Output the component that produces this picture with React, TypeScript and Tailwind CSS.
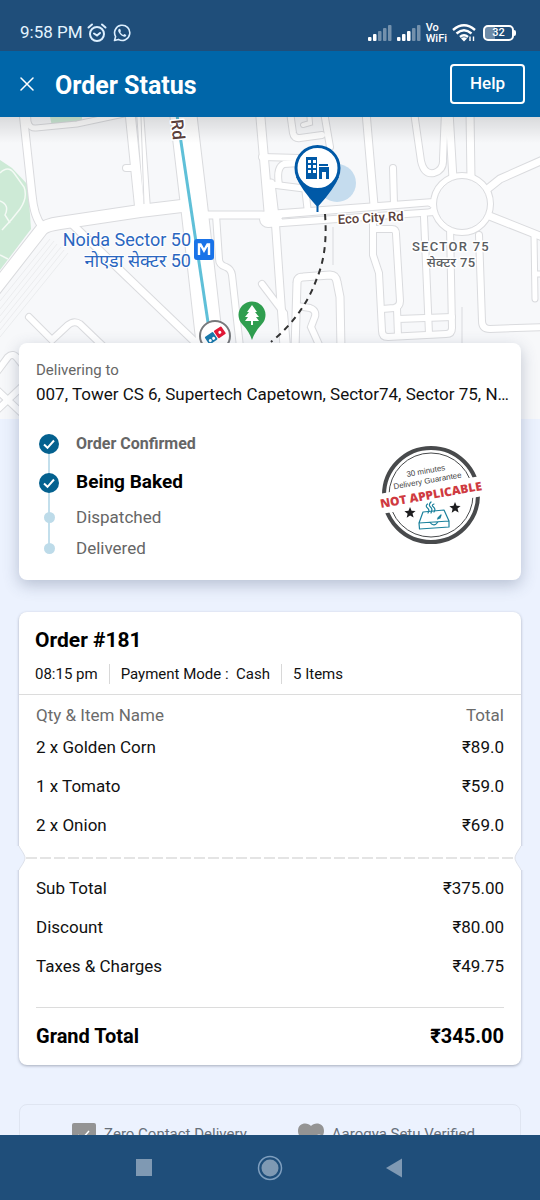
import React from "react";

type Road = { d: string; w: number };

const ROADS: Road[] = [
  { d: "M23 -5 L32 78 Q34 100 42 109", w: 7 },
  { d: "M28 -5 Q26 12 36 11 L77 7 L124 -3", w: 5 },
  { d: "M-8 176 L42 112 Q46 108 60 106 L140 94 L190 88", w: 12 },
  { d: "M130 -5 L140 94", w: 9 },
  { d: "M140 -5 L147 92", w: 6 },
  { d: "M126 51 L136 51", w: 6 },
  { d: "M73 108 L194 224", w: 7 },
  { d: "M29 200 L52 223 L68 208 Q74 203 80 207 L106 232", w: 6 },
  { d: "M-4 256 L8 240 Q13 235 18 242 L40 270", w: 6 },
  { d: "M-6 270 L30 304 M-6 296 L30 262", w: 6 },
  { d: "M200 98 L262 98 Q266 98 270 101", w: 7 },
  { d: "M260 -5 L269 100", w: 8 },
  { d: "M216 98 L219 142 Q219 148 226 150 Q231 152 232 158 L240 230", w: 6 },
  { d: "M262 40 L300 41", w: 6 },
  { d: "M262 167 L284 196 L287 230", w: 6 },
  { d: "M290 -5 L293 16 Q294 22 300 21 L322 18", w: 6 },
  { d: "M303 8 L310 6 L309 -5", w: 4 },
  { d: "M324 -5 L330 30", w: 6 },
  { d: "M268 67 L308 72", w: 6 },
  { d: "M279 68 Q276 50 284 47 L300 46", w: 6 },
  { d: "M305 70 L308 96", w: 6 },
  { d: "M271 66 L275 100 L284 230", w: 7 },
  { d: "M268 102 L434 90", w: 16 },
  { d: "M366 -5 L374 88", w: 7 },
  { d: "M393 51 L394 88", w: 6 },
  { d: "M414 -5 L421 44 Q424 58 434 56 Q444 53 443 42 L445 -5", w: 6 },
  { d: "M449 -5 L453 62", w: 7 },
  { d: "M470 -5 L471 62", w: 7 },
  { d: "M485 74 L500 62 L545 42", w: 7 },
  { d: "M487 98 L545 121", w: 7 },
  { d: "M534 117 L535 182", w: 5 },
  { d: "M535 157 L545 157", w: 5 },
  { d: "M479 118 L482 204 Q482 212 490 212 L545 210", w: 6 },
  { d: "M373 102 L373 138 L379 156 L382 214 Q382 220 388 220 L446 217 Q452 217 452 211 L450 110", w: 6 },
  { d: "M376 112 L392 112 Q396 112 396 117 L400 184 Q400 190 394 191 L382 192", w: 6 },
  { d: "M397 192 L398 219 M398 202 L452 200", w: 6 },
  { d: "M424 100 L429 217", w: 6 },
  { d: "M295 232 L297 166 Q297 160 303 160 L330 158 Q336 158 337 165 L340 180 L341 232", w: 7 },
  { d: "M297 189 L310 191 Q318 194 314 202 L311 210 L320 230", w: 6 },
];

const MapView: React.FC = () => (
  <svg
    viewBox="0 0 540 302"
    preserveAspectRatio="xMidYMin slice"
    className="block w-full h-[302px] bg-[#f7f8fa]"
    role="img"
    aria-label="Delivery map"
  >
    <defs>
      <linearGradient id="topShade" x1="0" y1="0" x2="0" y2="1">
        <stop offset="0" stopColor="#000" stopOpacity="0.12" />
        <stop offset="1" stopColor="#000" stopOpacity="0" />
      </linearGradient>
    </defs>

    {/* Parks */}
    <path d="M0 43 L12 51 L28 68 L31 112 L0 153Z" fill="#cdead6" />
    <path d="M50 0 H82 V5 L52 9Z" fill="#cdead6" />
    <path
      d="M0 56 Q8 48 14 56 L24 70 Q28 80 20 92 L12 102 L2 113 M0 84 Q10 88 5 98 L10 106 M0 138 L8 142"
      fill="none"
      stroke="#f4faf5"
      strokeWidth="1.5"
    />

    {/* Hatched lot */}
    <g stroke="#ebecee" strokeWidth="1">
      <path d="M50 122 L0 184 M54 124 L0 192 M57 127 L0 199 M61 130 L0 206 M64 133 L0 213 M68 136 L0 220" />
    </g>
    <path d="M333 110 V148 M462 190 V226" stroke="#e8e9ec" strokeWidth="2" />

    {/* Road casings first, then the fills */}
    <g fill="none" stroke="#dadbde" strokeLinecap="round">
      {ROADS.map((r) => (
        <path key={r.d} d={r.d} strokeWidth={r.w + 2} />
      ))}
      <path d="M183 -5 L194 88 L210 230" strokeWidth="28" />
      <circle cx="462" cy="87" r="28" strokeWidth="8" />
    </g>
    <g fill="none" stroke="#fff" strokeLinecap="round">
      {ROADS.map((r) => (
        <path key={r.d} d={r.d} strokeWidth={r.w} />
      ))}
      <path d="M183 -5 L194 88 L210 230" strokeWidth="26" />
      <circle cx="462" cy="87" r="28" strokeWidth="6" />
    </g>
    {/* Roundabout island covers the road ends */}
    <circle cx="462" cy="87" r="25.500" fill="#f7f8fa" stroke="#dadbde" />
    <path
      d="M282 101 L428 89 Q434 91 428 92 L282 102Z M141 0 L144 87"
      fill="#f7f8fa"
      stroke="#dadbde"
    />

    {/* Metro line */}
    <path d="M177 -2 L209 212" stroke="#5fc0d8" strokeWidth="3" />
    <rect x="194" y="122" width="20" height="21" rx="3" fill="#1a73e8" />
    <path d="M199 138 V127.500 H200.500 L204 133.500 L207.500 127.500 H209 V138" fill="none" stroke="#fff" strokeWidth="2.400" />

    <rect width="540" height="26" fill="url(#topShade)" />

    {/* Labels */}
    <g fontFamily="Roboto, 'Noto Sans', sans-serif" stroke="#fff" strokeLinejoin="round" paintOrder="stroke">
      <g fill="#2a66c0" strokeWidth="2" fontSize="18" textAnchor="end">
        <text x="191" y="129">Noida Sector 50</text>
        <text x="191" y="150">नोएडा सेक्टर 50</text>
      </g>
      <g fill="#5a403b" strokeWidth="3" fontWeight="500">
        <text fontSize="13" transform="translate(338 107) rotate(-3)">Eco City Rd</text>
        <text fontSize="17" transform="translate(171 3) rotate(84)">Rd</text>
      </g>
      <g fill="#5a5d61" strokeWidth="3" fontWeight="500" fontSize="13" textAnchor="middle">
        <text x="451" y="134" className="tracking-widest">SECTOR 75</text>
        <text x="451" y="150" className="tracking-wide">सेक्टर 75</text>
      </g>
    </g>

    {/* Delivery path */}
    <path
      d="M325 97 Q328 135 317 161 Q304 198 271 225"
      fill="none"
      stroke="#333"
      strokeWidth="2"
      strokeDasharray="6 5"
    />

    {/* Tree pin */}
    <path d="M252 223 Q249 214 242 207 A13.500 13.500 0 1 1 262 207 Q255 214 252 223Z" fill="#2f9e4f" />
    <path d="M252 188 L257 195 H255 L259 200 H256 L259 204 H253 V208 H251 V204 H245 L248 200 H245 L249 195 H247Z" fill="#fff" />

    {/* Store */}
    <circle cx="215" cy="219" r="15" fill="#fff" stroke="#77797c" strokeWidth="2" />
    <g transform="translate(215 218) rotate(-34)">
      <rect x="-10" y="-4" width="10" height="9" rx="1" fill="#1779ad" />
      <rect x="1" y="-4" width="9" height="9" rx="1" fill="#e21836" />
      <circle cx="5.500" cy="0.500" r="1.500" fill="#fff" />
      <circle cx="-7" cy="2" r="1.500" fill="#fff" />
      <circle cx="-3" cy="2" r="1.500" fill="#fff" />
    </g>

    {/* Home pin */}
    <circle cx="337" cy="66" r="19" fill="#c5dcee" />
    <path d="M296 60 Q301 72 316.500 89 V95 H318.500 V89 Q334 72 339 60Z" fill="#0059a7" />
    <circle cx="317.500" cy="51" r="21.500" fill="#fff" stroke="#0059a7" strokeWidth="3" />
    <path
      fill="#0059a7"
      fillRule="evenodd"
      d="M306 40 H317 V62 H306Z M308 43 V46 H311 V43Z M313 43 V46 H316 V43Z M308 48 V51 H311 V48Z M313 48 V51 H316 V48Z M308 53 V56 H311 V53Z M313 53 V56 H316 V53Z M319 47 H328 V49 H319Z M319 50 H329 V62 H326 V55 H322 V62 H319Z"
    />
  </svg>
);

const Signal: React.FC<{ level: number }> = ({ level }) => (
  <svg width="24" height="16" viewBox="0 0 24 16" fill="#fff" aria-hidden="true">
    {[4, 7, 10, 13, 16].map((h, i) => (
      <rect key={h} x={i * 5} y={16 - h} width="3.500" height={h} rx="1" opacity={i < level ? 1 : 0.38} />
    ))}
  </svg>
);

const StatusBar: React.FC = () => (
  <div className="flex h-[51px] shrink-0 items-end justify-between bg-[#1f4e7a] pr-6 pb-1.5 pl-5 text-white">
    <div className="flex h-6 items-center">
      <span className="text-[17px] text-[#e4f4ff]">9:58 PM</span>
      <svg className="ml-1 h-5 w-5" viewBox="0 0 20 20" fill="none" stroke="#dcefff" strokeWidth="2" strokeLinecap="round" aria-hidden="true">
        <circle cx="10" cy="11" r="7" />
        <path d="M7 10.500 L10 12.500 L13 10" />
        <path d="M1.500 4.500 L5 1.500 M18.500 4.500 L15 1.500" />
      </svg>
      <svg className="ml-1.5 h-[18px] w-[18px]" viewBox="0 0 18 18" fill="none" stroke="#dcefff" strokeWidth="1.600" aria-hidden="true">
        <path d="M1.500 16.500 L2.600 12.600 A7.600 7.600 0 1 1 5.400 15.400Z" strokeLinejoin="round" />
        <path
          d="M6.200 4.800 C5 5.400 4.800 7 6 8.800 C7.400 11 9.400 12.600 11.400 12.800 C12.600 12.800 13.400 11.800 13.300 11 L11.300 9.900 L10.300 11 C8.900 10.400 7.900 9.400 7.300 8.100 L8 7.200 L7.200 4.900Z"
          fill="#dcefff"
          stroke="none"
        />
      </svg>
    </div>
    <div className="flex h-6 items-center gap-[5px]">
      <Signal level={2} />
      <Signal level={3} />
      <div className="text-[11px] leading-[11px] font-medium">
        <div>Vo</div>
        <div>WiFi</div>
      </div>
      <svg className="h-[18px] w-6" viewBox="0 0 24 18" fill="none" stroke="#fff" strokeWidth="2.400" aria-hidden="true">
        <path d="M1 6 Q12 -3.500 23 6" />
        <path d="M4.500 9.500 Q12 3 19.500 9.500" />
        <path d="M8 13 Q12 9.500 16 13" />
        <path d="M12 17.500 L9 14.500 Q12 12 15 14.500Z" fill="#fff" stroke="none" />
        <path d="M18 17 V12.500 M21.500 12.500 V17" strokeWidth="1.400" />
      </svg>
      <div className="ml-0.5 flex items-center">
        <div className="relative flex h-4 w-[31px] items-center justify-center rounded-[5px] border-2 border-white text-[11px] font-medium">
          <span className="absolute inset-y-0 left-0 w-2.5 bg-white/35" />
          <span className="relative">32</span>
        </div>
        <span className="h-1.5 w-0.5 rounded-r bg-white" />
      </div>
    </div>
  </div>
);

const steps = [
  { label: "Order Confirmed", done: true, row: "h-[39px]", text: "text-base font-bold text-[#666]" },
  { label: "Being Baked", done: true, row: "h-[39px]", text: "text-[19px] font-bold text-black" },
  { label: "Dispatched", done: false, row: "h-[31px]", text: "text-[17px] text-[#666]" },
  { label: "Delivered", done: false, row: "h-[31px]", text: "text-[17px] text-[#666]" },
];

const Stamp: React.FC = () => (
  <svg className="h-[104px] w-[104px] shrink-0" viewBox="0 0 104 104" role="img" aria-label="Guarantee stamp">
    <circle cx="52" cy="52" r="47" fill="none" stroke="#484a4c" strokeWidth="4" />
    <circle cx="52" cy="52" r="42" fill="none" stroke="#484a4c" strokeWidth="1" />
    <g transform="rotate(-10 52 52)">
      <rect x="0" y="42" width="104" height="20" fill="#fff" />
      <g textAnchor="middle" fontFamily="'Liberation Sans', sans-serif" fontSize="8" fill="#444">
        <text x="51" y="30">30 minutes</text>
        <text x="51" y="40">Delivery Guarantee</text>
      </g>
      <text x="52" y="56" textAnchor="middle" fontFamily="'Open Sans', sans-serif" fontWeight="800" fontSize="12" fill="#cf3a41">
        NOT APPLICABLE
      </text>
    </g>
    <g fill="#1d1d1f">
      <path d="M31 64 l1.600 3.700 4 .2 -3.100 2.700 1.100 4 -3.500 -2.100 -3.400 2.300 .9 -4 -3.200 -2.500 4.100 -.5z" />
      <path d="M76 59 l1.600 3.700 4 .2 -3.100 2.700 1.100 4 -3.500 -2.100 -3.400 2.300 .9 -4 -3.200 -2.500 4.100 -.5z" />
    </g>
    <g fill="none" stroke="#1b819c" strokeWidth="1.200" strokeLinejoin="round" strokeLinecap="round">
      <path d="M44 69 L65 67 L70 78 L40 80Z M40 80 L40.500 86 L70 84 L70 78 M51 79.500 q4 5 8 -.5 M59 75 l3 -3 -1 3 -2.500 1" />
      <path d="M49 70 q2 -3 -.5 -5 t0 -4 M52 70 q2 -4 -.5 -6 t.5 -5 M55 69 q2 -3 -.5 -5 t.5 -3" />
    </g>
  </svg>
);

const DeliveryCard: React.FC = () => (
  <section className="relative mx-[19px] -mt-[76px] h-[237px] rounded-lg bg-white pt-[17px] pr-2.5 pl-[17px] shadow-[0_5px_16px_rgba(60,75,110,0.3)]">
    <p className="text-[15px] leading-5 text-[#666]">Delivering to</p>
    <p className="mt-0.5 truncate text-[17px] leading-6 text-[#111]">
      007, Tower CS 6, Supertech Capetown, Sector74, Sector 75, Noida
    </p>
    <div className="mt-[18px] flex justify-between pr-7">
      <ol className="relative">
        {/* Line joining the steps */}
        <span className="absolute top-5 bottom-5 left-3 w-0.5 bg-[#c3dfec]" />
        {steps.map((s) => (
          <li key={s.label} className={`relative flex items-center ${s.row}`}>
            <span className="flex w-[26px] justify-center">
              {s.done ? (
                <svg className="h-5 w-5" viewBox="0 0 20 20" aria-hidden="true">
                  <circle cx="10" cy="10" r="10" fill="#04618f" />
                  <path d="M5 10.500 L8.500 13.800 L15 6.500" fill="none" stroke="#fff" strokeWidth="2" />
                </svg>
              ) : (
                <span className="h-[11px] w-[11px] rounded-full bg-[#bddbe9]" />
              )}
            </span>
            <span className={`ml-3.5 ${s.text}`}>{s.label}</span>
          </li>
        ))}
      </ol>
      <div className="pt-[19px]">
        <Stamp />
      </div>
    </div>
  </section>
);

const items = [
  { name: "2 x Golden Corn", price: "₹89.0" },
  { name: "1 x Tomato", price: "₹59.0" },
  { name: "2 x Onion", price: "₹69.0" },
];

const totals = [
  { name: "Sub Total", price: "₹375.00" },
  { name: "Discount", price: "₹80.00" },
  { name: "Taxes & Charges", price: "₹49.75" },
];

const Notch: React.FC<{ className?: string }> = ({ className = "" }) => (
  <svg className={`h-6 w-2.5 shrink-0 ${className}`} viewBox="-3 0 10 24" aria-hidden="true">
    <path d="M-3 0 H0 L1 2 Q6 9 6 12 Q6 15 1 22 L0 24 H-3Z" fill="#ecf2fe" />
    <path d="M0 0 L1 2 Q6 9 6 12 Q6 15 1 22 L0 24" fill="none" stroke="#dde1ea" />
  </svg>
);

const OrderCard: React.FC = () => (
  <section className="mx-[19px] mt-8 rounded-lg bg-white pb-1.5 text-[#111] shadow-[0_1px_3px_rgba(60,70,90,0.4)]">
    <div className="border-b border-[#dcdcdc] px-4 pt-[13px] pb-[9px]">
      <h2 className="text-[21px] leading-[30px] font-bold text-black">Order #181</h2>
      <div className="mt-2 flex h-[22px] items-center text-[15px]">
        <span>08:15 pm</span>
        <span className="mx-[11px] h-5 w-px bg-[#d8d8d8]" />
        <span>Payment Mode :&nbsp; Cash</span>
        <span className="mx-[11px] h-5 w-px bg-[#d8d8d8]" />
        <span>5 Items</span>
      </div>
    </div>

    <table className="mt-2 w-full text-[17px]">
      <thead>
        <tr className="text-[#6b6b6b]">
          <th className="pl-[17px] text-left font-normal">Qty &amp; Item Name</th>
          <th className="pr-[17px] text-right font-normal">Total</th>
        </tr>
      </thead>
      <tbody>
        {items.map((item) => (
          <tr key={item.name} className="h-[39px]">
            <td className="pl-[17px]">{item.name}</td>
            <td className="pr-[17px] text-right">{item.price}</td>
          </tr>
        ))}
      </tbody>
    </table>

    {/* Tear line */}
    <div className="-mx-[3px] flex items-center">
      <Notch />
      <div className="h-0.5 flex-1 bg-[repeating-linear-gradient(90deg,#e4e4e4_0_11px,transparent_11px_14px)]" />
      <Notch className="rotate-180" />
    </div>

    <table className="w-full text-[17px]">
      <tbody>
        {totals.map((row) => (
          <tr key={row.name} className="h-[39px]">
            <td className="pl-[17px]">{row.name}</td>
            <td className="pr-[17px] text-right">{row.price}</td>
          </tr>
        ))}
      </tbody>
    </table>
    <div className="mx-[17px] mt-5 flex items-center justify-between border-t border-[#dcdcdc] pt-[13px] pb-2 text-xl leading-[30px] font-bold text-black">
      <span>Grand Total</span>
      <span>₹345.00</span>
    </div>
  </section>
);

const SafetyCard: React.FC = () => (
  <section className="mx-[19px] mt-[39px] flex h-[62px] items-center justify-center gap-[51px] rounded-lg border border-[#dfe5f1] pl-[7px] text-[15px] text-[#666f7a]">
    <div className="flex items-center gap-2">
      <svg className="h-6 w-6" viewBox="0 0 24 24" aria-hidden="true">
        <rect width="24" height="24" rx="2" fill="#949494" />
        <path d="M6 12 L10 16 L17 8" fill="none" stroke="#fff" strokeWidth="1.500" />
      </svg>
      <span>Zero Contact Delivery</span>
    </div>
    <div className="flex items-center gap-2">
      <svg className="h-6 w-[26px]" viewBox="0 0 26 24" aria-hidden="true">
        <path d="M13 3 C10 -1 0 -1 0 8 C0 15 8 20 13 24 C18 20 26 15 26 8 C26 -1 16 -1 13 3Z" fill="#949494" />
        <circle cx="21" cy="16" r="4.500" fill="#ecf2fe" />
      </svg>
      <span>Aarogya Setu Verified</span>
    </div>
  </section>
);

const NavBar: React.FC = () => (
  <nav className="flex h-[65px] shrink-0 items-center justify-center gap-[100px] bg-[#1f4e7a]">
    <button aria-label="Recent apps" className="flex w-[26px] justify-center">
      <span className="h-[17px] w-4 bg-[#7f99b3]" />
    </button>
    <button aria-label="Home">
      <svg className="h-[26px] w-[26px]" viewBox="0 0 26 26">
        <circle cx="13" cy="13" r="11.500" fill="none" stroke="#7f9fbf" strokeWidth="1.500" />
        <circle cx="13" cy="13" r="8.500" fill="#7f99b3" />
      </svg>
    </button>
    <button aria-label="Back" className="flex w-[26px] justify-center">
      <svg className="h-5 w-5" viewBox="0 0 20 20">
        <path d="M0 10 L16 0.500 V19.500Z" fill="#7f99b3" />
      </svg>
    </button>
  </nav>
);

export default function App() {
  return (
    <div className="flex h-screen flex-col overflow-hidden bg-[#ecf2fe] font-['Roboto','Noto_Sans',sans-serif]">
      <StatusBar />
      <header className="flex h-[66px] shrink-0 items-center bg-[#0066a9] pr-[15px] pl-5 text-white">
        <button aria-label="Close">
          <svg className="h-3.5 w-3.5" viewBox="0 0 14 14" stroke="#fff" strokeWidth="1.500" strokeLinecap="round">
            <path d="M1 1 L13 13 M13 1 L1 13" />
          </svg>
        </button>
        <h1 className="ml-[21px] flex-1 pt-1 text-[25px] font-bold">Order Status</h1>
        <button className="h-10 w-[75px] rounded border-2 border-white text-[17px] font-medium">Help</button>
      </header>
      <main className="min-h-0 flex-1 overflow-hidden">
        <MapView />
        <DeliveryCard />
        <OrderCard />
        <SafetyCard />
      </main>
      <NavBar />
    </div>
  );
}
